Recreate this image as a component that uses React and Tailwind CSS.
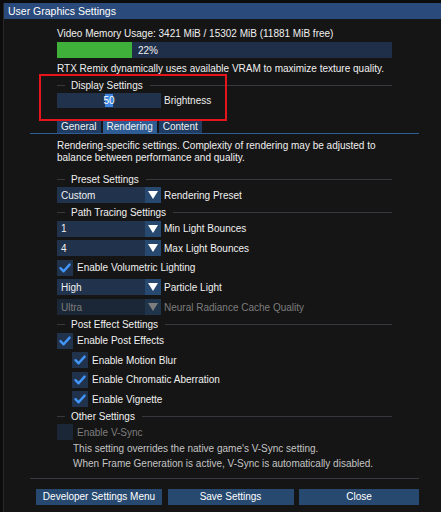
import React from 'react';

const FONT = { fontFamily: '"Liberation Sans", Arial, sans-serif' };

function SectionHeader({ title }) {
  return (
    <div className="flex items-center h-[14px] pt-[5px]">
      <div className="w-[8px] h-px bg-[#38383f]"></div>
      <span className="ml-[6px] leading-[9px] text-[#f0f0f0]">{title}</span>
      <div className="flex-1 h-px ml-[7px] bg-[#38383f]"></div>
    </div>
  );
}

function Arrow({ disabled }) {
  return (
    <svg width="10" height="8" viewBox="0 0 10 8">
      <polygon points="0,0 10,0 5,8" fill={disabled ? '#7d7d7d' : '#ffffff'} />
    </svg>
  );
}

function Combo({ value, label, disabled }) {
  return (
    <div className="flex items-center h-[16px] mt-[3.6px]">
      <div className={`flex w-[104px] h-full ${disabled ? 'bg-[#1b2736]' : 'bg-[#20324c]'}`}>
        <div className={`flex-1 flex items-center pl-[4px] ${disabled ? 'text-[#7d7d7d]' : 'text-[#f0f0f0]'}`}>
          {value}
        </div>
        <div className={`w-[16px] flex items-center justify-center ${disabled ? 'bg-[#20344b]' : 'bg-[#27496f]'}`}>
          <Arrow disabled={disabled} />
        </div>
      </div>
      <span className={`ml-[3px] ${disabled ? 'text-[#7d7d7d]' : 'text-[#f0f0f0]'}`}>{label}</span>
    </div>
  );
}

function Checkbox({ label, checked = true, disabled, indent }) {
  return (
    <div className={`flex items-center h-[16px] mt-[3.6px] ${indent ? 'pl-[15px]' : ''}`}>
      <div className={`w-[16px] h-[16px] flex items-center justify-center ${disabled ? 'bg-[#1b2736]' : 'bg-[#20324c]'}`}>
        {checked && (
          <svg width="16" height="16" viewBox="0 0 16 16">
            <polyline points="3.5,8.2 6.6,11.3 12.6,4.6" fill="none" stroke="#4296fa" strokeWidth="2.4" strokeLinecap="round" strokeLinejoin="round" />
          </svg>
        )}
      </div>
      <span className={`ml-[4px] ${disabled ? 'text-[#7d7d7d]' : 'text-[#f0f0f0]'}`}>{label}</span>
    </div>
  );
}

function Tab({ label, active }) {
  return (
    <div className={`h-[14px] flex items-center px-[4px] ${active ? 'bg-[#2e5c94]' : 'bg-[#203c62]'}`}>
      {label}
    </div>
  );
}

export default function App() {
  return (
    <div style={FONT} className="relative w-[441px] h-[512px] overflow-hidden bg-[#0c0c0c] pt-[3px] pl-[3px] text-[10px] leading-[13px] text-[#f0f0f0]">
      <div className="flex flex-col h-[520px] bg-[#151515] border-l border-[#262626]">
        <div className="h-[16px] bg-[#294a7a] flex items-center pl-[4px] text-[10.5px] text-white">
          User Graphics Settings
        </div>

        <div className="pl-[26px] pr-[22px]">
          <div className="px-[27px]">
            <div className="mt-[8px] whitespace-nowrap">Video Memory Usage: 3421 MiB / 15302 MiB (11881 MiB free)</div>
            <div className="flex items-center h-[16px] mt-[2px] bg-[#1f2f49]">
              <div className="w-[75px] h-full bg-[#3fb13a]"></div>
              <span className="ml-[6px]">22%</span>
            </div>
            <div className="mt-[3.5px] whitespace-nowrap">RTX Remix dynamically uses available VRAM to maximize texture quality.</div>

            <div className="mt-[1px]">
              <SectionHeader title="Display Settings" />
            </div>
            <div className="flex items-center mt-[3.5px]">
              <div className="relative w-[104px] h-[15px] bg-[#20324c] flex items-center justify-center">
                <div className="absolute left-[48px] top-[1px] bottom-[1px] w-[8px] bg-[#3d85e0]"></div>
                <span className="relative text-white">50</span>
              </div>
              <span className="ml-[3px]">Brightness</span>
            </div>

            <div className="flex gap-[2px] mt-[11px]">
              <Tab label="General" />
              <Tab label="Rendering" active />
              <Tab label="Content" />
            </div>
          </div>
          <div className="h-px bg-[#2e5c94]"></div>

          <div className="px-[27px]">
            <p className="mt-[5.5px] leading-[12.5px]">
              Rendering-specific settings. Complexity of rendering may be adjusted to balance between performance and quality.
            </p>

            <div className="mt-[5px]">
              <SectionHeader title="Preset Settings" />
            </div>
            <Combo value="Custom" label="Rendering Preset" />

            <SectionHeader title="Path Tracing Settings" />
            <Combo value="1" label="Min Light Bounces" />
            <Combo value="4" label="Max Light Bounces" />
            <Checkbox label="Enable Volumetric Lighting" />
            <Combo value="High" label="Particle Light" />
            <Combo value="Ultra" label="Neural Radiance Cache Quality" disabled />

            <SectionHeader title="Post Effect Settings" />
            <Checkbox label="Enable Post Effects" />
            <Checkbox label="Enable Motion Blur" indent />
            <Checkbox label="Enable Chromatic Aberration" indent />
            <Checkbox label="Enable Vignette" indent />

            <div className="-mt-[0.6px]">
              <SectionHeader title="Other Settings" />
            </div>
            <Checkbox label="Enable V-Sync" checked={false} disabled />

            <div className="pl-[16px] mt-[0.5px] leading-[15px] text-[#c4c4c4]">
              <div>This setting overrides the native game's V-Sync setting.</div>
              <div>When Frame Generation is active, V-Sync is automatically disabled.</div>
            </div>
          </div>

          <div className="h-px mt-[7.3px] bg-[#38383f]"></div>

          <div className="flex gap-[5.5px] pl-[6px] mt-[9.3px]">
            <button className="w-[126px] h-[16px] bg-[#27496f] text-white">Developer Settings Menu</button>
            <button className="w-[126px] h-[16px] bg-[#27496f] text-white">Save Settings</button>
            <button className="flex-1 h-[16px] bg-[#27496f] text-white">Close</button>
          </div>
        </div>
      </div>

      <div className="absolute left-[39px] top-[74px] w-[188px] h-[47px] border-2 border-[#e8141b]"></div>
    </div>
  );
}
